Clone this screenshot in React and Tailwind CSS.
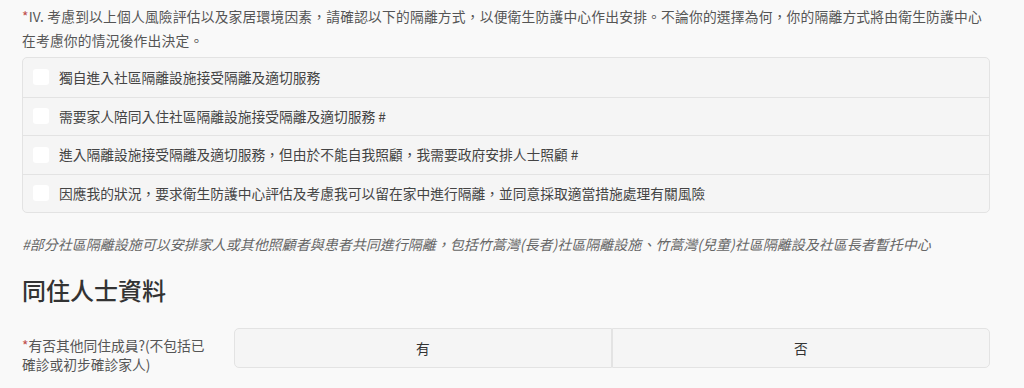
import { useState } from 'react';

const OPTIONS = [
  '獨自進入社區隔離設施接受隔離及適切服務',
  '需要家人陪同入住社區隔離設施接受隔離及適切服務 #',
  '進入隔離設施接受隔離及適切服務，但由於不能自我照顧，我需要政府安排人士照顧 #',
  '因應我的狀況，要求衛生防護中心評估及考慮我可以留在家中進行隔離，並同意採取適當措施處理有關風險',
];

const FONT = { fontFamily: '"Noto Sans CJK TC", "Noto Sans", "Liberation Sans", sans-serif' };

export default function App() {
  const [checked, setChecked] = useState([]);
  const [live, setLive] = useState(null);

  const toggle = (i) =>
    setChecked((c) => (c.includes(i) ? c.filter((x) => x !== i) : [...c, i]));

  return (
    <div className="min-h-screen w-full bg-[#f9f9f9] px-[22px] pt-[4px] text-[#555]" style={FONT}>
      <div className="w-[968px]">
        {/* 隔離方式 */}
        <p className="text-[13.75px] leading-[24px] tracking-[0.2px] text-[#555]">
          <span className="text-[#c0504d]">*</span>IV. 考慮到以上個人風險評估以及家居環境因素，請確認以下的隔離方式，以便衛生防護中心作出安排。不論你的選擇為何，你的隔離方式將由衛生防護中心
          <br />
          在考慮你的情況後作出決定。
        </p>

        <div className="mt-[5px] rounded-[5px] border border-[#e3e3e3] bg-[#f5f5f5]">
          {OPTIONS.map((text, i) => (
            <label
              key={i}
              className={`flex h-[38.5px] cursor-pointer items-center gap-[10px] px-[10px] ${i > 0 ? 'border-t border-[#e3e3e3]' : ''}`}
            >
              <span
                onClick={() => toggle(i)}
                className="flex h-[16px] w-[16px] items-center justify-center rounded-[3px] bg-white"
              >
                {checked.includes(i) && <span className="h-[8px] w-[8px] rounded-[1px] bg-[#555]" />}
              </span>
              <span className="text-[13.75px] text-[#444]">{text}</span>
            </label>
          ))}
        </div>

        <p className="mt-[19px] text-[14px] italic leading-[24px] text-[#666]">
          #部分社區隔離設施可以安排家人或其他照顧者與患者共同進行隔離，包括竹蒿灣(長者)社區隔離設施、竹蒿灣(兒童)社區隔離設及社區長者暫托中心
        </p>

        {/* 同住人士資料 */}
        <h2 className="mt-[18px] text-[24px] font-medium leading-[32px] text-[#333]">同住人士資料</h2>

        <div className="mt-[22px] flex items-start">
          <div className="w-[212px] pr-[18px] pt-[8px] text-[13.75px] leading-[19px] text-[#555]">
            <span className="text-[#c0504d]">*</span>有否其他同住成員?(不包括已確診或初步確診家人)
          </div>
          <div className="flex flex-1">
            {['有', '否'].map((v, i) => (
              <button
                key={v}
                onClick={() => setLive(v)}
                className={`h-[40px] flex-1 border border-[#e3e3e3] text-[13.75px] text-[#333] ${
                  i === 0 ? 'rounded-l-[5px]' : 'rounded-r-[5px]'
                } ${live === v ? 'bg-[#e8e8e8]' : 'bg-[#f5f5f5]'}`}
              >
                {v}
              </button>
            ))}
          </div>
        </div>
      </div>
    </div>
  );
}
